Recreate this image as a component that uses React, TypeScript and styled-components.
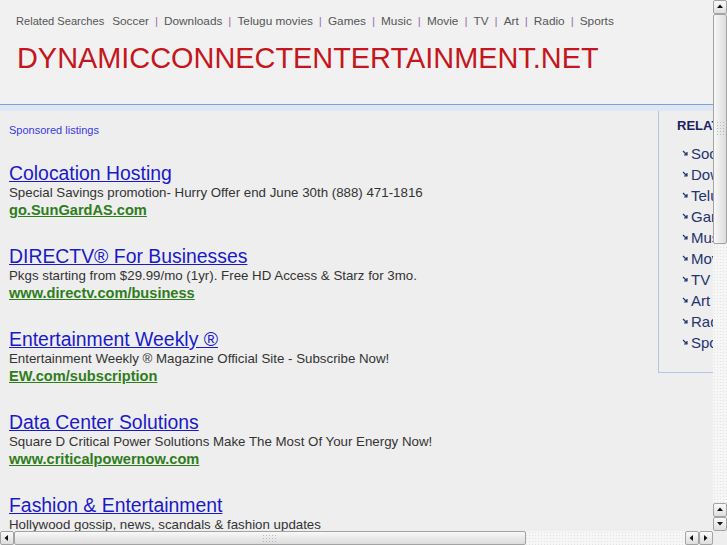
import React from "react";
import styled, { createGlobalStyle } from "styled-components";

const Global = createGlobalStyle`
  html, body { margin: 0; padding: 0; overflow: hidden; }
  body { background: #eeeeee; font-family: "Liberation Sans", Arial, sans-serif; }
`;

const Viewport = styled.div`
  width: 727px;
  height: 545px;
  display: grid;
  grid-template-columns: 713px 14px;
  grid-template-rows: 531px 14px;
  overflow: hidden;
  background: #eeeeee;
`;

const ScrollArea = styled.div`
  overflow: hidden;
`;

const Page = styled.div`
  width: 932px;
  background: #eeeeee;
`;

const Header = styled.header`
  height: 105px;
  background: #f1f1f1;
  border-bottom: 1px solid #7f9fd6;
  box-sizing: border-box;
  padding: 14px 0 0 16px;
`;

const Band = styled.div`
  height: 6px;
  background: #dfe7f5;
`;

const TopRow = styled.div`
  display: flex;
  align-items: baseline;
  font-size: 11.8px;
  color: #555;
`;

const TopLabel = styled.span`
  font-size: 11.1px;
  color: #555;
  margin-right: 8px;
`;

const TopLink = styled.a`
  color: #555;
  text-decoration: none;
`;

const Sep = styled.span`
  color: #a070b0;
  margin: 0 6px;
`;

const Title = styled.h1`
  margin: 14px 0 0 1px;
  font-weight: normal;
  font-size: 28.9px;
  color: #c4161c;
`;

const Main = styled.div`
  display: flex;
  align-items: flex-start;
`;

const Content = styled.div`
  width: 649px;
  padding: 13px 0 0 9px;
`;

const Sponsored = styled.div`
  font-size: 11px;
  color: #3939e0;
  margin-bottom: 27px;
`;

const Ad = styled.div`
  margin-bottom: 27px;
`;

const AdTitle = styled.a`
  display: block;
  font-size: 19.4px;
  color: #1a1ac8;
  text-decoration: underline;
  line-height: 21px;
`;

const AdDesc = styled.div`
  font-size: 13.3px;
  color: #333;
  line-height: 17px;
`;

const AdUrl = styled.a`
  display: block;
  font-size: 14.6px;
  font-weight: bold;
  color: #2e7d1c;
  text-decoration: underline;
  line-height: 18px;
`;

const Sidebar = styled.aside`
  width: 260px;
  height: 262px;
  border-left: 1px solid #b3c5e6;
  border-bottom: 1px solid #b3c5e6;
  padding: 7px 0 0 18px;
  box-sizing: border-box;
`;

const SideHead = styled.div`
  font-size: 13px;
  font-weight: bold;
  color: #1a2263;
  margin-bottom: 10px;
`;

const SideList = styled.ul`
  list-style: none;
  margin: 0;
  padding: 0 0 0 5px;
`;

const SideItem = styled.li`
  display: flex;
  align-items: center;
  height: 21px;
  font-size: 15px;
  color: #24336e;
`;

const ArrowIcon = styled.svg`
  margin-right: 2px;
  flex: none;
`;

const Arrow = () => (
  <ArrowIcon width="7" height="7" viewBox="0 0 7 7">
    <path d="M1 1 L5 5 M5 2 L5 5 L2 5" stroke="#24336e" strokeWidth="1.2" fill="none" />
  </ArrowIcon>
);

/* scrollbars */
const VBar = styled.div`
  display: flex;
  flex-direction: column;
  background-color: #f6f6f6;
  background-image: radial-gradient(#e4e4e4 0.6px, transparent 0.7px);
  background-size: 3px 3px;
`;

const HBar = styled.div`
  display: flex;
  flex-direction: row;
  background-color: #f6f6f6;
  background-image: radial-gradient(#e4e4e4 0.6px, transparent 0.7px);
  background-size: 3px 3px;
`;

const Corner = styled.div`
  background: #eeeeee;
`;

const SBtn = styled.div`
  width: 14px;
  height: 14px;
  flex: none;
  box-sizing: border-box;
  border: 1px solid #a3a3a3;
  border-radius: 2px;
  background: linear-gradient(#fafafa, #dedede);
  display: flex;
  align-items: center;
  justify-content: center;
`;

const Thumb = styled.div<{ $vertical?: boolean; $size: number }>`
  flex: none;
  box-sizing: border-box;
  ${(p) => (p.$vertical ? `height: ${p.$size}px; width: 14px;` : `width: ${p.$size}px; height: 14px;`)}
  border: 1px solid #a3a3a3;
  border-radius: 2px;
  background: ${(p) =>
    p.$vertical ? "linear-gradient(to right, #f8f8f8, #dcdcdc)" : "linear-gradient(#f8f8f8, #dcdcdc)"};
  display: flex;
  align-items: center;
  justify-content: center;
`;

const Grip = styled.div<{ $vertical?: boolean }>`
  ${(p) => (p.$vertical ? "width: 9px; height: 16px;" : "width: 16px; height: 9px;")}
  background-image: radial-gradient(#b8b8b8 0.7px, transparent 0.9px);
  background-size: 3px 3px;
`;

const Spacer = styled.div`
  flex: 1;
`;

const Tri = ({ dir }: { dir: "up" | "down" | "left" | "right" }) => {
  const d = {
    up: "M1 5 L4 1.5 L7 5 Z",
    down: "M1 2 L7 2 L4 5.5 Z",
    left: "M5 1 L5 7 L1.5 4 Z",
    right: "M2 1 L2 7 L5.5 4 Z",
  }[dir];
  return (
    <svg width="8" height="8" viewBox="0 0 8 8">
      <path d={d} fill="#111" />
    </svg>
  );
};

const topLinks = ["Soccer", "Downloads", "Telugu movies", "Games", "Music", "Movie", "TV", "Art", "Radio", "Sports"];

const ads = [
  { t: "Colocation Hosting", d: "Special Savings promotion- Hurry Offer end June 30th (888) 471-1816", u: "go.SunGardAS.com" },
  { t: "DIRECTV® For Businesses", d: "Pkgs starting from $29.99/mo (1yr). Free HD Access & Starz for 3mo.", u: "www.directv.com/business" },
  { t: "Entertainment Weekly ®", d: "Entertainment Weekly ® Magazine Official Site - Subscribe Now!", u: "EW.com/subscription" },
  { t: "Data Center Solutions", d: "Square D Critical Power Solutions Make The Most Of Your Energy Now!", u: "www.criticalpowernow.com" },
  { t: "Fashion & Entertainment", d: "Hollywood gossip, news, scandals & fashion updates", u: "www.hollywoodgossip.com" },
];

export default function App() {
  return (
    <Viewport>
      <Global />
      <ScrollArea>
        <Page>
          <Header>
            <TopRow>
              <TopLabel>Related Searches</TopLabel>
              {topLinks.map((l, i) => (
                <React.Fragment key={l}>
                  {i > 0 && <Sep>|</Sep>}
                  <TopLink href="#">{l}</TopLink>
                </React.Fragment>
              ))}
            </TopRow>
            <Title>DYNAMICCONNECTENTERTAINMENT.NET</Title>
          </Header>
          <Band />
          <Main>
            <Content>
              <Sponsored>Sponsored listings</Sponsored>
              {ads.map((a) => (
                <Ad key={a.t}>
                  <AdTitle href="#">{a.t}</AdTitle>
                  <AdDesc>{a.d}</AdDesc>
                  <AdUrl href="#">{a.u}</AdUrl>
                </Ad>
              ))}
            </Content>
            <Sidebar>
              <SideHead>RELATED SEARCHES</SideHead>
              <SideList>
                {topLinks.map((l) => (
                  <SideItem key={l}>
                    <Arrow />
                    {l}
                  </SideItem>
                ))}
              </SideList>
            </Sidebar>
          </Main>
        </Page>
      </ScrollArea>
      <VBar>
        <SBtn><Tri dir="up" /></SBtn>
        <Thumb $vertical $size={230}><Grip $vertical /></Thumb>
        <Spacer />
        <SBtn><Tri dir="up" /></SBtn>
        <SBtn><Tri dir="down" /></SBtn>
      </VBar>
      <HBar>
        <SBtn><Tri dir="left" /></SBtn>
        <Thumb $size={512}><Grip /></Thumb>
        <Spacer />
        <SBtn><Tri dir="left" /></SBtn>
        <SBtn><Tri dir="right" /></SBtn>
      </HBar>
      <Corner />
    </Viewport>
  );
}
